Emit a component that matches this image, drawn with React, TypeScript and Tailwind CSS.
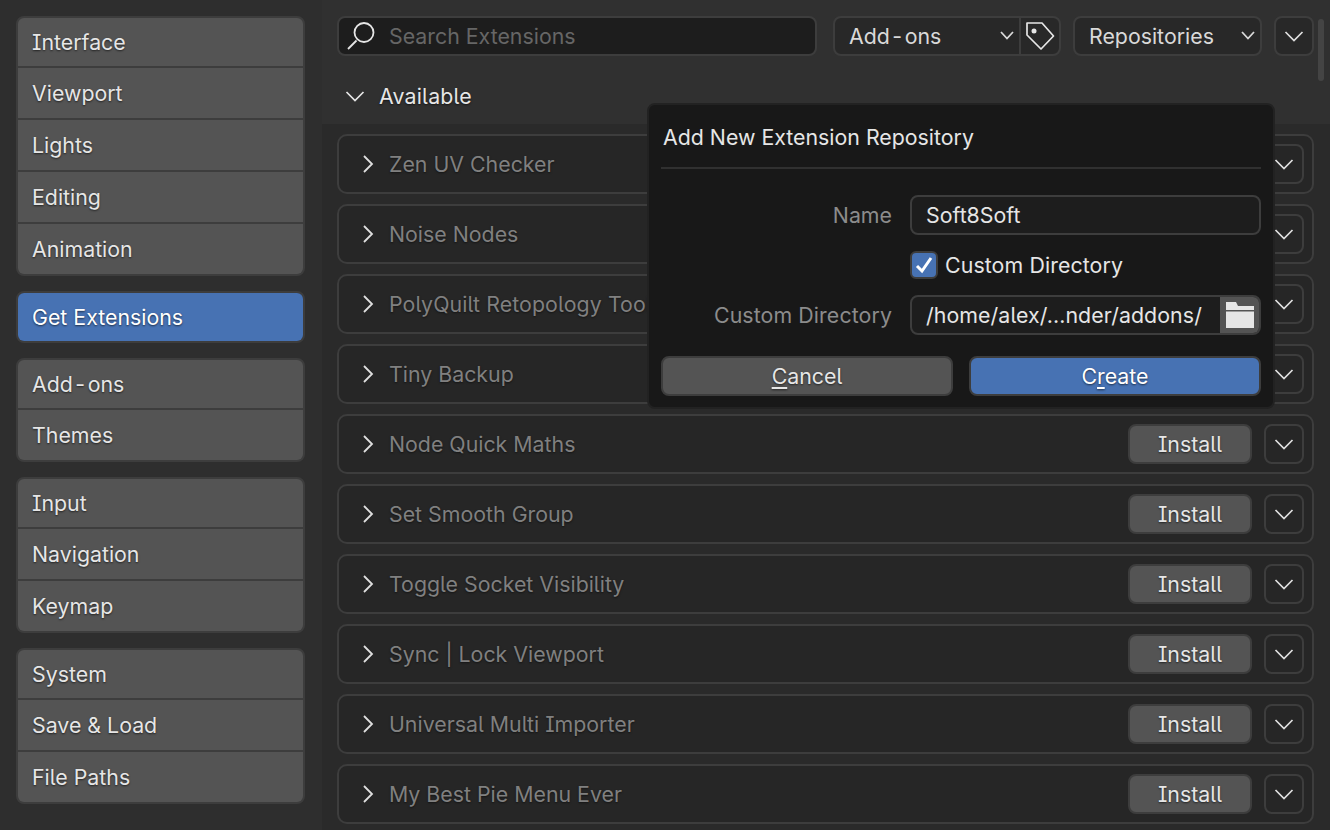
const sidebarGroups = [
  ['Interface', 'Viewport', 'Lights', 'Editing', 'Animation'],
  ['Get Extensions'],
  ['Add-ons', 'Themes'],
  ['Input', 'Navigation', 'Keymap'],
  ['System', 'Save & Load', 'File Paths'],
]

const extensions = [
  'Zen UV Checker',
  'Noise Nodes',
  'PolyQuilt Retopology Tool',
  'Tiny Backup',
  'Node Quick Maths',
  'Set Smooth Group',
  'Toggle Socket Visibility',
  'Sync | Lock Viewport',
  'Universal Multi Importer',
  'My Best Pie Menu Ever',
]

function ChevronDown() {
  return (
    <svg width="20" height="20" viewBox="0 0 20 20" fill="none" stroke="currentColor" strokeWidth="1.7">
      <path d="M1.5 6l8.5 8.5L18.500 6" />
    </svg>
  )
}

function SmallChevron() {
  return (
    <svg width="14" height="14" viewBox="0 0 14 14" fill="none" stroke="currentColor" strokeWidth="1.8">
      <path d="M1 3l6 6.500L13 3" />
    </svg>
  )
}

function ChevronRight() {
  return (
    <svg width="12" height="18" viewBox="0 0 12 18" fill="none" stroke="#e0e0e0" strokeWidth="1.8">
      <path d="M2 1l8 8-8 8" />
    </svg>
  )
}

function SearchIcon() {
  return (
    <svg width="30" height="30" viewBox="0 0 30 30" fill="none" stroke="#e6e6e6" strokeWidth="1.8">
      <circle cx="17" cy="11.500" r="9.500" />
      <path d="M9.500 19.500L1 28" />
    </svg>
  )
}

function TagIcon() {
  return (
    <svg width="30" height="30" viewBox="0 0 30 30" fill="none" stroke="#e6e6e6" strokeWidth="1.7">
      <path d="M2 2h15l11.500 13L16 28 2 14z" strokeLinejoin="round" />
      <circle cx="9" cy="10" r="2.500" fill="#e6e6e6" stroke="none" />
    </svg>
  )
}

function FolderIcon() {
  return (
    <svg width="28" height="26" viewBox="0 0 28 26" fill="#e6e6e6">
      <path d="M0 0h10l2 4h16v4H0z" />
      <path d="M0 9.500h28V26H0z" />
    </svg>
  )
}

function Label({ text }: { text: string }) {
  if (text !== 'Add-ons') return <>{text}</>
  return (
    <>
      Add<span className="mx-[2.500px]">-</span>ons
    </>
  )
}

function Sidebar() {
  return (
    <div className="w-[322px] shrink-0 flex flex-col gap-[15px] pl-[16px] pr-[17px] pt-[16px] bg-[#2e2e2e]">
      {sidebarGroups.map((group) => (
        <div key={group[0]} className="flex flex-col gap-[2px] rounded-[8px] border-2 border-[#3d3d3d] bg-[#3d3d3d] overflow-hidden">
          {group.map((item, i) => (
            <div
              key={item}
              className={`flex items-center pl-[14px] text-[21.33px] text-[#e6e6e6] [text-shadow:0_1px_2px_rgba(0,0,0,0.6)] ${
                i === 0 ? 'h-[48px]' : 'h-[50px]'
              } ${item === 'Get Extensions' ? 'bg-[#4772b3] text-white' : 'bg-[#545454]'}`}
            >
              <span className="mt-[2px]">
                <Label text={item} />
              </span>
            </div>
          ))}
        </div>
      ))}
    </div>
  )
}

function TopBar() {
  return (
    <div className="h-[124px] bg-[#303030] pl-[15px] pr-[16px] pt-[16px] shrink-0">
      <div className="flex items-start">
        <div className="w-[480px] h-[40px] flex items-center gap-[12px] pl-[8px] rounded-[8px] border-2 border-[#3d3d3d] bg-[#1d1d1d] text-[21.33px] text-[#666666]">
          <SearchIcon />
          <span className="mt-[2px]">Search Extensions</span>
        </div>
        <div className="ml-[16px] w-[228px] h-[40px] flex rounded-[8px] border-2 border-[#3d3d3d] bg-[#282828] text-[21.33px] text-[#d9d9d9] overflow-hidden">
          <div className="flex-1 flex items-center justify-between pl-[14px] pr-[5px] border-r-2 border-[#3d3d3d]">
            <span className="mt-[2px]">
              <Label text="Add-ons" />
            </span>
            <SmallChevron />
          </div>
          <div className="w-[38px] flex items-center justify-center">
            <TagIcon />
          </div>
        </div>
        <div className="ml-[12px] w-[189px] h-[40px] flex items-center justify-between pl-[14px] pr-[5px] rounded-[8px] border-2 border-[#3d3d3d] bg-[#282828] text-[21.33px] text-[#d9d9d9]">
          <span className="mt-[2px]">Repositories</span>
          <SmallChevron />
        </div>
        <div className="ml-[12px] w-[40px] h-[40px] flex items-center justify-center rounded-[8px] border-2 border-[#3d3d3d] bg-[#282828] text-[#e0e0e0]">
          <ChevronDown />
        </div>
      </div>
      <div className="flex items-center mt-[20px] h-[40px] pl-[8px] gap-[14px] text-[21.33px] text-[#e6e6e6] [text-shadow:0_1px_2px_rgba(0,0,0,0.6)]">
        <ChevronDown />
        <span className="mt-[2px] tracking-[0.2px]">Available</span>
      </div>
    </div>
  )
}

function ExtensionRow({ name }: { name: string }) {
  return (
    <div className="h-[60px] shrink-0 flex items-center rounded-[10px] border-2 border-[#3d3d3d] bg-[#262626] pl-[23px] pr-[8px]">
      <ChevronRight />
      <span
        className={`ml-[15px] mt-[2px] text-[21.33px] text-[#808080] [text-shadow:0_1px_2px_rgba(0,0,0,0.5)] ${
          name === 'PolyQuilt Retopology Tool' ? 'tracking-[0.1px]' : ''
        }`}
      >
        {name}
      </span>
      <div className="ml-auto w-[124px] h-[40px] flex items-center justify-center rounded-[8px] border-2 border-[#3d3d3d] bg-[#545454] text-[21.33px] text-[#e6e6e6] [text-shadow:0_1px_2px_rgba(0,0,0,0.6)]">
        <span className="mt-[2px]">Install</span>
      </div>
      <div className="ml-[12px] w-[40px] h-[40px] flex items-center justify-center rounded-[8px] border-2 border-[#3d3d3d] bg-[#262626] text-[#e0e0e0]">
        <ChevronDown />
      </div>
    </div>
  )
}

function RepoDialog() {
  return (
    <div className="absolute left-[647px] top-[103px] w-[628px] h-[306px] rounded-[8px] border-2 border-[#222222] bg-[#181818] px-[12px]">
      <div className="h-[64px] flex items-center pl-[2px] pt-[4px] border-b-2 border-[#303030] text-[21.33px] text-[#e6e6e6]">
        Add New Extension Repository
      </div>
      <div className="flex flex-col mt-[26px]">
        <div className="flex items-center h-[40px]">
          <span className="w-[249px] mt-[2px] pr-[18px] text-right text-[21.33px] text-[#8c8c8c]">Name</span>
          <div className="flex-1 h-[40px] flex items-center pl-[14px] rounded-[8px] border-2 border-[#3d3d3d] bg-[#1d1d1d] text-[21.33px] text-[#e6e6e6]">
            <span className="mt-[2px]">Soft8Soft</span>
          </div>
        </div>
        <div className="flex items-center h-[28px] mt-[16px] ml-[249px]">
          <div className="w-[28px] h-[28px] flex items-center justify-center rounded-[6px] border-2 border-[#3d3d3d] bg-[#4772b3]">
            <svg width="18" height="18" viewBox="0 0 18 18" fill="none" stroke="#ffffff" strokeWidth="3">
              <path d="M2 10l5 5 9-13" />
            </svg>
          </div>
          <span className="ml-[7px] mt-[2px] text-[21.33px] tracking-[0.1px] text-[#e6e6e6]">Custom Directory</span>
        </div>
        <div className="flex items-center h-[40px] mt-[16px]">
          <span className="w-[249px] mt-[2px] pr-[18px] text-right text-[21.33px] tracking-[0.1px] text-[#8c8c8c]">Custom Directory</span>
          <div className="flex-1 h-[40px] flex rounded-[8px] border-2 border-[#3d3d3d] bg-[#1d1d1d] overflow-hidden">
            <div className="flex-1 min-w-0 flex items-center pl-[14px] text-[21.33px] tracking-[0.08px] text-[#e6e6e6]">
              <span className="mt-[2px]">/home/alex/...nder/addons/</span>
            </div>
            <div className="w-[39px] shrink-0 flex items-center justify-center bg-[#545454]">
              <FolderIcon />
            </div>
          </div>
        </div>
        <div className="flex gap-[16px] mt-[21px]">
          <div className="flex-1 h-[40px] flex items-center justify-center rounded-[8px] border-2 border-[#3d3d3d] bg-[#545454] text-[21.33px] text-[#e6e6e6] [text-shadow:0_1px_2px_rgba(0,0,0,0.6)]">
            <span className="mt-[2px]"><span className="underline underline-offset-[3px]">C</span>ancel</span>
          </div>
          <div className="flex-1 h-[40px] flex items-center justify-center rounded-[8px] border-2 border-[#3d3d3d] bg-[#4772b3] text-[21.33px] text-white [text-shadow:0_1px_2px_rgba(0,0,0,0.6)]">
            <span className="mt-[2px]">C<span className="underline underline-offset-[3px]">r</span>eate</span>
          </div>
        </div>
      </div>
    </div>
  )
}

export default function App() {
  return (
    <div className="relative w-[1330px] h-[830px] overflow-hidden flex bg-[#2e2e2e] font-['Inter',sans-serif] [font-feature-settings:'cv05','cv08']">
      <Sidebar />
      <div className="flex-1 min-w-0 flex flex-col">
        <TopBar />
        <div className="flex-1 bg-[#2a2a2a] pl-[15px] pr-[16px] pt-[10px] flex flex-col gap-[10px] overflow-hidden">
          {extensions.map((name) => (
            <ExtensionRow key={name} name={name} />
          ))}
        </div>
      </div>
      <div className="absolute left-[1318px] top-[19px] w-[6px] h-[62px] rounded-full bg-[#444444]" />
      <RepoDialog />
    </div>
  )
}
